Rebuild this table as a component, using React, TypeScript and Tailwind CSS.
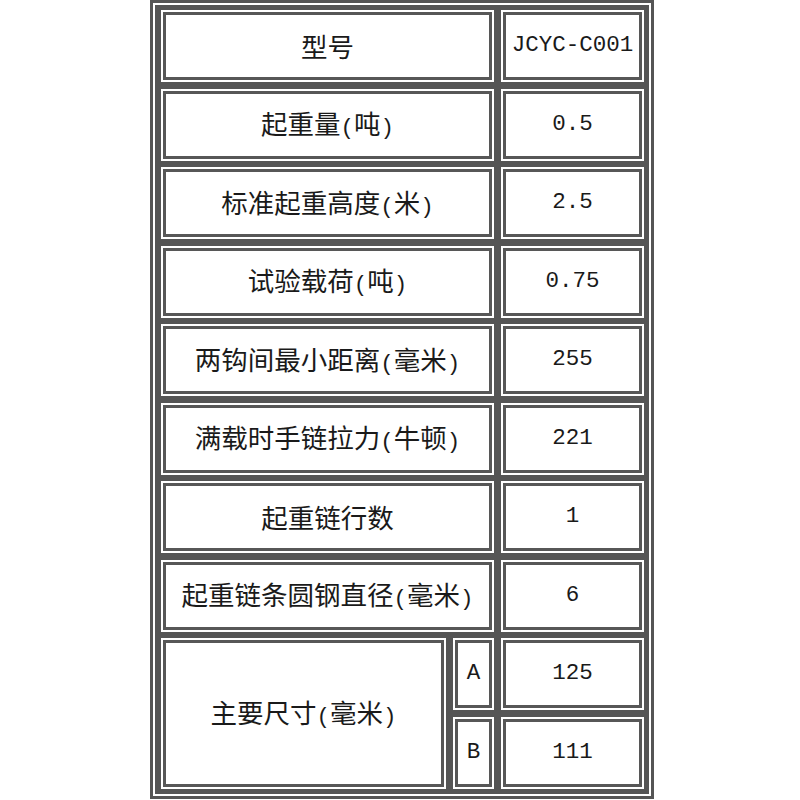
import React from "react";

const cjk = { fontFamily: '"Noto Sans CJK SC", "Liberation Serif", sans-serif' };
const mono = { fontFamily: '"Liberation Mono", "Noto Sans CJK SC", monospace' };

function Label({ text }: { text: string }) {
  const parts = text.split(/([()])/).filter((p) => p.length > 0);
  return (
    <span className="whitespace-nowrap">
      {parts.map((p, i) =>
        p === "(" || p === ")" ? (
          <span key={i} className="text-[22.5px]" style={mono}>
            {p}
          </span>
        ) : (
          <span key={i}>{p}</span>
        )
      )}
    </span>
  );
}

function Cell({
  children,
  className = "",
  isMono = false,
}: {
  children: React.ReactNode;
  className?: string;
  isMono?: boolean;
}) {
  return (
    <div className={"border-2 border-white " + className}>
      <div
        className={
          "h-full border-[3px] border-[#575757] bg-white flex items-center justify-center text-[#1a1a1a] " +
          (isMono ? "text-[22.5px]" : "text-[26.5px]")
        }
        style={isMono ? mono : cjk}
      >
        {children}
      </div>
    </div>
  );
}

const rows: [string, string][] = [
  ["型号", "JCYC-C001"],
  ["起重量(吨)", "0.5"],
  ["标准起重高度(米)", "2.5"],
  ["试验载荷(吨)", "0.75"],
  ["两钩间最小距离(毫米)", "255"],
  ["满载时手链拉力(牛顿)", "221"],
  ["起重链行数", "1"],
  ["起重链条圆钢直径(毫米)", "6"],
];

export default function App() {
  return (
    <div className="w-[800px] h-[800px] bg-white overflow-hidden">
      <div className="ml-[150px] w-[504px] border-[3px] border-[#555555]">
        <div className="border-2 border-white">
          <div className="bg-[#555555] pl-[6px] pr-[5px] py-[5px]">
            <div className="grid grid-cols-[285px_41px_143px] grid-rows-[repeat(10,72px)] gap-x-[7px] gap-y-[6.5px]">
              {rows.map(([k, v]) => (
                <React.Fragment key={k}>
                  <Cell className="col-span-2">
                    <Label text={k} />
                  </Cell>
                  <Cell isMono>{v}</Cell>
                </React.Fragment>
              ))}
              <Cell className="row-span-2">
                <Label text="主要尺寸(毫米)" />
              </Cell>
              <Cell isMono>A</Cell>
              <Cell isMono>125</Cell>
              <Cell isMono>B</Cell>
              <Cell isMono>111</Cell>
            </div>
          </div>
        </div>
      </div>
    </div>
  );
}
